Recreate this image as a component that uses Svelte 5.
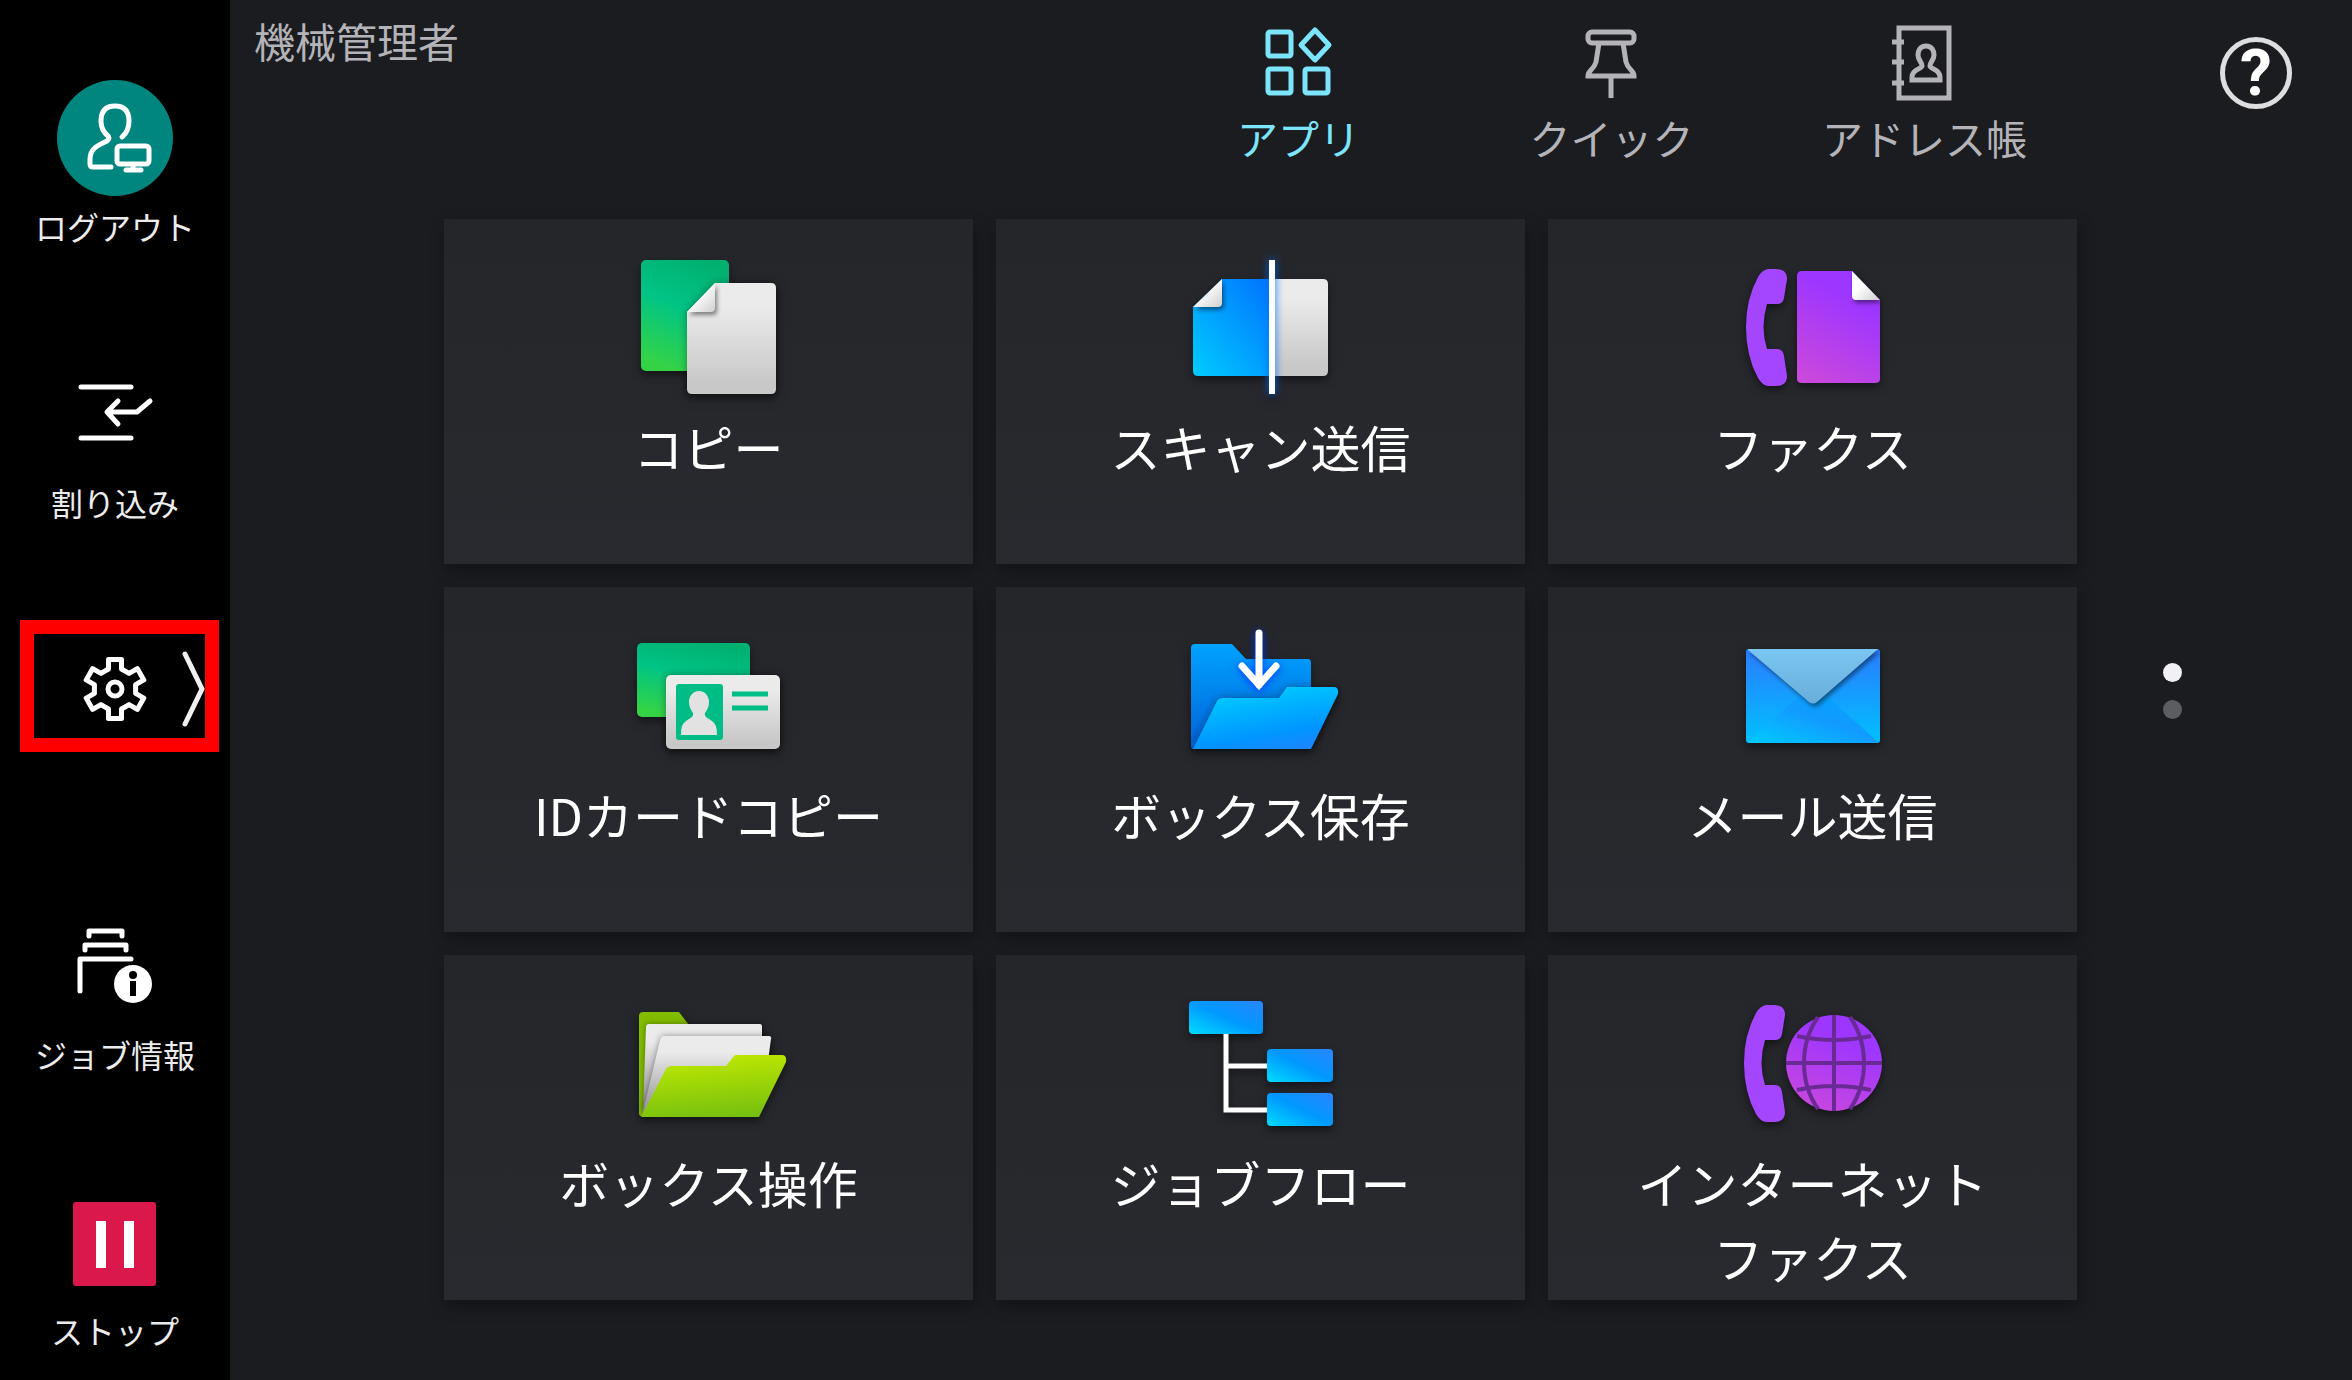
<script lang="ts">
  // Home screen of the panel: side rail, top tabs and the app launcher.
  type Tile = { id: string; label: string };

  const tiles: Tile[] = [
    { id: 'copy', label: 'コピー' },
    { id: 'scan', label: 'スキャン送信' },
    { id: 'fax', label: 'ファクス' },
    { id: 'idcard', label: 'IDカードコピー' },
    { id: 'boxsave', label: 'ボックス保存' },
    { id: 'mail', label: 'メール送信' },
    { id: 'boxopen', label: 'ボックス操作' },
    { id: 'jobflow', label: 'ジョブフロー' },
    { id: 'ifax', label: 'インターネット\nファクス' },
  ];

  const tabs = [
    { id: 'apps', label: 'アプリ' },
    { id: 'quick', label: 'クイック' },
    { id: 'address', label: 'アドレス帳' },
  ];

  const pages = [0, 1];

  let activeTab = $state('apps');
  let page = $state(0);
</script>

<!-- gradients shared by the tile icons -->
<svg class="defs" width="0" height="0" aria-hidden="true">
  <defs>
    <linearGradient id="paper" x1="0" y1="0" x2="0" y2="1">
      <stop offset="0.2" stop-color="#ebebeb" />
      <stop offset="0.9" stop-color="#c8c8c8" />
    </linearGradient>
    <linearGradient id="fold" x1="0" y1="0" x2="1" y2="1">
      <stop offset="0.4" stop-color="#ffffff" />
      <stop offset="1" stop-color="#cfcfcf" />
    </linearGradient>
    <linearGradient id="green" x1="0.7" y1="0" x2="0.4" y2="1">
      <stop offset="0" stop-color="#00b070" />
      <stop offset="0.45" stop-color="#00c485" />
      <stop offset="1" stop-color="#34d346" />
    </linearGradient>
    <linearGradient id="blue" x1="1" y1="0" x2="0" y2="1">
      <stop offset="0" stop-color="#0072ff" />
      <stop offset="1" stop-color="#00ccff" />
    </linearGradient>
    <linearGradient id="node" x1="1" y1="0" x2="0" y2="1">
      <stop offset="0" stop-color="#2a85ff" />
      <stop offset="0.5" stop-color="#0099ff" />
      <stop offset="1" stop-color="#00dcff" />
    </linearGradient>
    <linearGradient id="folder-back" x1="0" y1="0" x2="0" y2="1">
      <stop offset="0" stop-color="#00a2ff" />
      <stop offset="1" stop-color="#0062d8" />
    </linearGradient>
    <linearGradient id="folder-front" x1="0.4" y1="0" x2="0.8" y2="1">
      <stop offset="0" stop-color="#00ccff" />
      <stop offset="0.7" stop-color="#0096ff" />
      <stop offset="1" stop-color="#1f84ff" />
    </linearGradient>
    <linearGradient id="lime" x1="0.4" y1="0" x2="0.6" y2="1">
      <stop offset="0" stop-color="#c0e800" />
      <stop offset="1" stop-color="#76c010" />
    </linearGradient>
    <linearGradient id="sheet" x1="0" y1="0" x2="0" y2="1">
      <stop offset="0.2" stop-color="#ebebeb" />
      <stop offset="1" stop-color="#8c8c8c" />
    </linearGradient>
    <linearGradient id="purple" x1="0.6" y1="0" x2="0.2" y2="1">
      <stop offset="0.2" stop-color="#9d36ff" />
      <stop offset="1" stop-color="#ca48dc" />
    </linearGradient>
    <linearGradient id="flap" x1="0" y1="0" x2="0" y2="1">
      <stop offset="0" stop-color="#7ac6f3" />
      <stop offset="1" stop-color="#69aeda" />
    </linearGradient>
    <linearGradient id="mail-side" x1="0" y1="0" x2="0" y2="1">
      <stop offset="0" stop-color="#2a7cff" />
      <stop offset="1" stop-color="#00c0ff" />
    </linearGradient>
    <linearGradient id="mail-bottom" x1="1" y1="0" x2="0" y2="1">
      <stop offset="0" stop-color="#00a6ff" />
      <stop offset="0.45" stop-color="#129aff" />
      <stop offset="1" stop-color="#00ccff" />
    </linearGradient>
  </defs>
</svg>

{#snippet handset()}
  <path
    d="M36 26H44Q55 26 55 36L52 55Q51 61 45 61H35Q28 84 35 106H45Q51 106 52 113L55 133Q55 143 44 143H36Q30 142 26 135Q14 113 14 84Q14 56 26 34Q30 27 36 26Z"
    fill="#a546ff"
  />
{/snippet}

{#snippet tileIcon(id: string)}
  <svg class="tile-icon" viewBox="1 0 160 160" aria-hidden="true">
    {#if id === 'copy'}
      <rect x="13" y="17" width="88" height="111" rx="5" fill="url(#green)" />
      <g class="lift">
        <path d="M87 40H143Q148 40 148 45V146Q148 151 143 151H64Q59 151 59 146V69Z" fill="url(#paper)" />
      </g>
      <path class="crease" d="M87 40V65Q87 69 83 69H59Z" fill="url(#fold)" />
    {:else if id === 'scan'}
      <path d="M42 36H92V133H18Q13 133 13 128V64Z" fill="url(#blue)" />
      <path d="M92 36H143Q148 36 148 41V128Q148 133 143 133H92Z" fill="url(#paper)" />
      <path class="crease" d="M42 36V60Q42 64 38 64H13Z" fill="url(#fold)" />
      <rect class="beam" x="89" y="17" width="6" height="134" fill="#fff" />
    {:else if id === 'fax'}
      {@render handset()}
      <path d="M70 28H120L148 57V136Q148 140 143 140H70Q65 140 65 136V33Q65 28 70 28Z" fill="url(#purple)" />
      <path class="crease" d="M120 28L148 57H124Q120 57 120 53Z" fill="url(#fold)" />
    {:else if id === 'idcard'}
      <rect x="9" y="32" width="113" height="74" rx="5" fill="url(#green)" />
      <g class="lift">
        <rect x="38" y="64" width="114" height="74" rx="5" fill="url(#paper)" />
      </g>
      <rect x="48" y="73" width="47" height="56" rx="3" fill="#00bd85" />
      <path
        d="M71 80C78 80 81 86 81 91C81 96 79 99 77 102C76 106 80 107 84 110C88 113 89 117 89 124H53C53 117 54 113 58 110C62 107 66 106 65 102C63 99 61 96 61 91C61 86 64 80 71 80Z"
        fill="#e2e2e2"
      />
      <path d="M104 83H140M104 97H140" stroke="#00bd85" stroke-width="5" />
    {:else if id === 'boxsave'}
      <path d="M15 33H52L66 48H128Q131 48 131 52V138H13Q11 138 11 134V37Q11 33 15 33Z" fill="url(#folder-back)" />
      <path class="lift-blue" d="M79 22V74M62 55L79 74L96 55" fill="none" stroke="#fff" stroke-width="7" stroke-linecap="round" />
      <g class="lift">
        <path d="M13 138L37 90Q39 87 43 87H99L107 76H154Q159 76 158 83L131 138Z" fill="url(#folder-front)" />
      </g>
    {:else if id === 'mail'}
      <rect x="14" y="38" width="134" height="94" rx="3" fill="url(#mail-side)" />
      <path d="M16 131L65 87H97L146 131Q145 132 143 132H19Q17 132 16 131Z" fill="url(#mail-bottom)" />
      <path class="crease" d="M16 38H146L85 91Q81 94 77 91L16 39Z" fill="url(#flap)" />
    {:else if id === 'boxopen'}
      <path d="M15 33H51L61 46V137H13Q11 137 11 134V37Q11 33 15 33Z" fill="#82bd00" />
      <path class="sheet" d="M21 45H132Q134 45 134 48V76L15 132L18 48Q18 45 21 45Z" fill="url(#sheet)" />
      <path class="sheet" d="M36 57H141Q144 57 143 60L140 82L14 137L32 61Q33 57 36 57Z" fill="url(#sheet)" />
      <path d="M13 138L38 90Q40 87 44 87H98L107 76H154Q159 76 158 83L131 138Z" fill="url(#lime)" />
    {:else if id === 'jobflow'}
      <path d="M46 50V131H90M46 87H90" fill="none" stroke="#fff" stroke-width="5" />
      <rect x="9" y="22" width="74" height="33" rx="4" fill="url(#node)" />
      <rect x="87" y="70" width="66" height="33" rx="4" fill="url(#node)" />
      <rect x="87" y="114" width="66" height="33" rx="4" fill="url(#node)" />
    {:else}
      <g transform="translate(-2 0)">{@render handset()}</g>
      <circle cx="102" cy="84" r="48" fill="url(#purple)" />
      <g fill="none" stroke="#6a2a94" stroke-width="4">
        <path d="M102 36V132M54 84H150M65 57Q102 65 139 57M65 111Q102 103 139 111" />
        <path d="M86 38Q72 58 72 84T86 130M118 38Q132 58 132 84T118 130" />
      </g>
    {/if}
  </svg>
{/snippet}

<div class="panel">
  <nav class="rail">
    <button class="slot">
      <svg class="slot-icon" viewBox="0 0 116 116" aria-hidden="true">
        <circle cx="58" cy="58" r="58" fill="#00857f" />
        <g class="line">
          <path d="M65 57C70 53 72 48 72 41C72 31 67 26 58 26S44 31 44 41C44 48 46 52 51 56Q53 59 50 61C42 65 33 68 33 79V84Q33 87 36 87H54" />
          <rect x="60" y="66" width="32" height="18" rx="3" />
          <path d="M76 85V90M69 90H84" />
        </g>
      </svg>
      <span class="slot-label">ログアウト</span>
    </button>

    <button class="slot">
      <svg class="slot-icon" viewBox="0 0 116 116" aria-hidden="true">
        <g class="line">
          <path d="M24 31H74M24 82H74" />
          <path d="M61 45L50 56L61 68M51 56H80L93 45" />
        </g>
      </svg>
      <span class="slot-label">割り込み</span>
    </button>

    <button class="slot" aria-label="設定">
      <svg class="slot-icon" viewBox="0 0 116 116" aria-hidden="true">
        <g class="line" transform="translate(58 57)">
          <path
            d="M-6.5 -20V-29.5H6.5V-20L14.1 -15.6L22.3 -20.4L28.8 -9.1L20.6 -4.4V4.4L28.8 9.1L22.3 20.4L14.1 15.6L6.5 20V29.5H-6.5V20L-14.1 15.6L-22.3 20.4L-28.8 9.1L-20.6 4.4V-4.4L-28.8 -9.1L-22.3 -20.4L-14.1 -15.6Z"
          />
          <circle r="7" />
        </g>
      </svg>
      <svg class="chevron" viewBox="0 0 24 78" aria-hidden="true">
        <path d="M3 4L20 39L3 74" fill="none" stroke="#f0f0f0" stroke-width="5" stroke-linecap="round" />
      </svg>
      <span class="highlight"></span>
    </button>

    <button class="slot">
      <svg class="slot-icon" viewBox="0 0 116 116" aria-hidden="true">
        <g class="line">
          <path d="M32 28V23H65V28M28 42V37H69V42M23 83V51H74" />
        </g>
        <circle cx="76" cy="76" r="19" fill="#fff" />
        <circle cx="76" cy="67" r="4" fill="#000" />
        <rect x="73" y="73" width="6" height="15" fill="#000" />
      </svg>
      <span class="slot-label">ジョブ情報</span>
    </button>

    <button class="slot">
      <svg class="slot-icon" viewBox="0 0 116 116" aria-hidden="true">
        <rect x="16" y="18" width="83" height="84" rx="3" fill="#da184c" />
        <path d="M39 37H49V84H39ZM67 37H77V84H67Z" fill="#fff" />
      </svg>
      <span class="slot-label">ストップ</span>
    </button>
  </nav>

  <main class="main">
    <header class="top">
      <div class="user">機械管理者</div>
      <div class="tabs" role="tablist">
        {#each tabs as tab (tab.id)}
          <button
            class="tab"
            class:active={activeTab === tab.id}
            role="tab"
            aria-selected={activeTab === tab.id}
            onclick={() => (activeTab = tab.id)}
          >
            <svg class="tab-icon" viewBox="1 0 80 80" aria-hidden="true">
              {#if tab.id === 'apps'}
                <rect x="10" y="9" width="23" height="24" rx="2" />
                <rect x="10" y="46" width="23" height="24" rx="2" />
                <rect x="47" y="46" width="23" height="24" rx="2" />
                <path d="M57 7L71 22L57 37L43 22Z" stroke-linejoin="round" />
              {:else if tab.id === 'quick'}
                <rect x="17" y="9" width="46" height="11" rx="4" />
                <path d="M28 20L25 39Q24 43 20 47Q17 50 17 53H63Q63 50 60 47Q56 43 55 39L52 20M40 54V75" />
              {:else}
                <path d="M15 5H65V75H15ZM8 19H20M8 39H20M8 60H20" />
                <path
                  d="M42 23C48 23 50 28 50 32C50 37 46 39 46 43C46 46 56 46 56 54V57H28V54C28 46 38 46 38 43C38 39 34 37 34 32C34 28 36 23 42 23Z"
                />
              {/if}
            </svg>
            <span>{tab.label}</span>
          </button>
        {/each}
      </div>
      <div class="help-wrap">
        <button class="help" aria-label="ヘルプ">?</button>
      </div>
    </header>

    <div class="board">
      <div class="tiles">
        {#each tiles as tile (tile.id)}
          <button class="tile">
            {@render tileIcon(tile.id)}
            <span class="tile-label">{tile.label}</span>
          </button>
        {/each}
      </div>
      <div class="pager">
        {#each pages as n (n)}
          <button class="dot" class:current={page === n} aria-label="{n + 1}ページ" onclick={() => (page = n)}></button>
        {/each}
      </div>
    </div>
  </main>
</div>

<style>
  :global(body) {
    background: #1b1c20;
  }

  button {
    border: 0;
    padding: 0;
    background: none;
    color: inherit;
    font: inherit;
    cursor: pointer;
  }

  .defs {
    position: absolute;
  }

  .panel {
    display: flex;
    min-height: 100vh;
    background: #1b1c20;
    color: #fff;
    font-family: 'Noto Sans CJK JP', sans-serif;
  }

  .rail {
    width: 230px;
    flex: none;
    background: #000;
    display: flex;
    flex-direction: column;
  }

  .slot {
    position: relative;
    height: 276px;
    padding-top: 80px;
    display: flex;
    flex-direction: column;
    align-items: center;
    gap: 6px;
  }

  .slot-icon {
    width: 116px;
    height: 116px;
    flex: none;
  }

  .slot-label {
    font-size: 32px;
    line-height: 48px;
    color: #ececec;
    white-space: nowrap;
  }

  .line {
    fill: none;
    stroke: #fff;
    stroke-width: 5;
    stroke-linecap: round;
    stroke-linejoin: round;
  }

  .chevron {
    position: absolute;
    top: 98px;
    right: 24px;
    width: 24px;
    height: 78px;
  }

  .highlight {
    position: absolute;
    top: 68px;
    left: 20px;
    right: 11px;
    height: 132px;
    box-sizing: border-box;
    border: 14px solid #f00;
  }

  .main {
    flex: 1;
    min-width: 0;
  }

  .top {
    display: flex;
    height: 219px;
    color: #b4b4b8;
  }

  .user {
    flex: 1;
    padding: 10px 0 0 24px;
    font-size: 41px;
    line-height: 60px;
  }

  .tabs {
    display: flex;
  }

  .tab {
    width: 313px;
    padding-top: 23px;
    display: flex;
    flex-direction: column;
    align-items: center;
    gap: 4px;
    font-size: 41px;
    line-height: 60px;
  }

  .tab.active {
    color: #7ce5fb;
  }

  .tab-icon {
    width: 80px;
    height: 80px;
    fill: none;
    stroke: currentColor;
    stroke-width: 5;
  }

  .help-wrap {
    width: 271px;
    padding: 37px 60px 0 0;
    box-sizing: border-box;
    display: flex;
    justify-content: flex-end;
    align-items: flex-start;
  }

  .help {
    width: 72px;
    height: 72px;
    border: 5px solid #dedee0;
    border-radius: 50%;
    color: #fff;
    font: 700 64px/64px Roboto, sans-serif;
  }

  .board {
    display: flex;
    padding-left: 214px;
  }

  .tiles {
    flex: 1;
    display: grid;
    grid-template-columns: repeat(3, 1fr);
    gap: 23px;
  }

  .tile {
    height: 345px;
    padding-top: 24px;
    display: flex;
    flex-direction: column;
    align-items: center;
    gap: 6px;
    background: linear-gradient(#25262a, #292a2f);
    box-shadow: 2px 6px 14px rgba(0, 0, 0, 0.35);
  }

  .tile-icon {
    width: 160px;
    height: 160px;
    flex: none;
    filter: drop-shadow(0 4px 4px rgba(0, 0, 0, 0.5));
  }

  .lift {
    filter: drop-shadow(0 0 4px rgba(0, 0, 0, 0.35));
  }

  .lift-blue {
    filter: drop-shadow(0 2px 4px #0040ff);
  }

  .crease {
    filter: drop-shadow(2px 3px 2px rgba(0, 0, 0, 0.45));
  }

  .sheet {
    filter: drop-shadow(0 0 3px rgba(0, 0, 0, 0.4));
  }

  .beam {
    filter: drop-shadow(0 0 4px #0072ff);
  }

  .tile-label {
    font-size: 50px;
    line-height: 74px;
    white-space: pre-line;
  }

  .pager {
    width: 275px;
    padding: 444px 0 0 86px;
    box-sizing: border-box;
    display: flex;
    flex-direction: column;
    gap: 18px;
  }

  .dot {
    width: 19px;
    height: 19px;
    border-radius: 50%;
    background: #5c5d60;
  }

  .dot.current {
    background: #f0f0f6;
  }
</style>
